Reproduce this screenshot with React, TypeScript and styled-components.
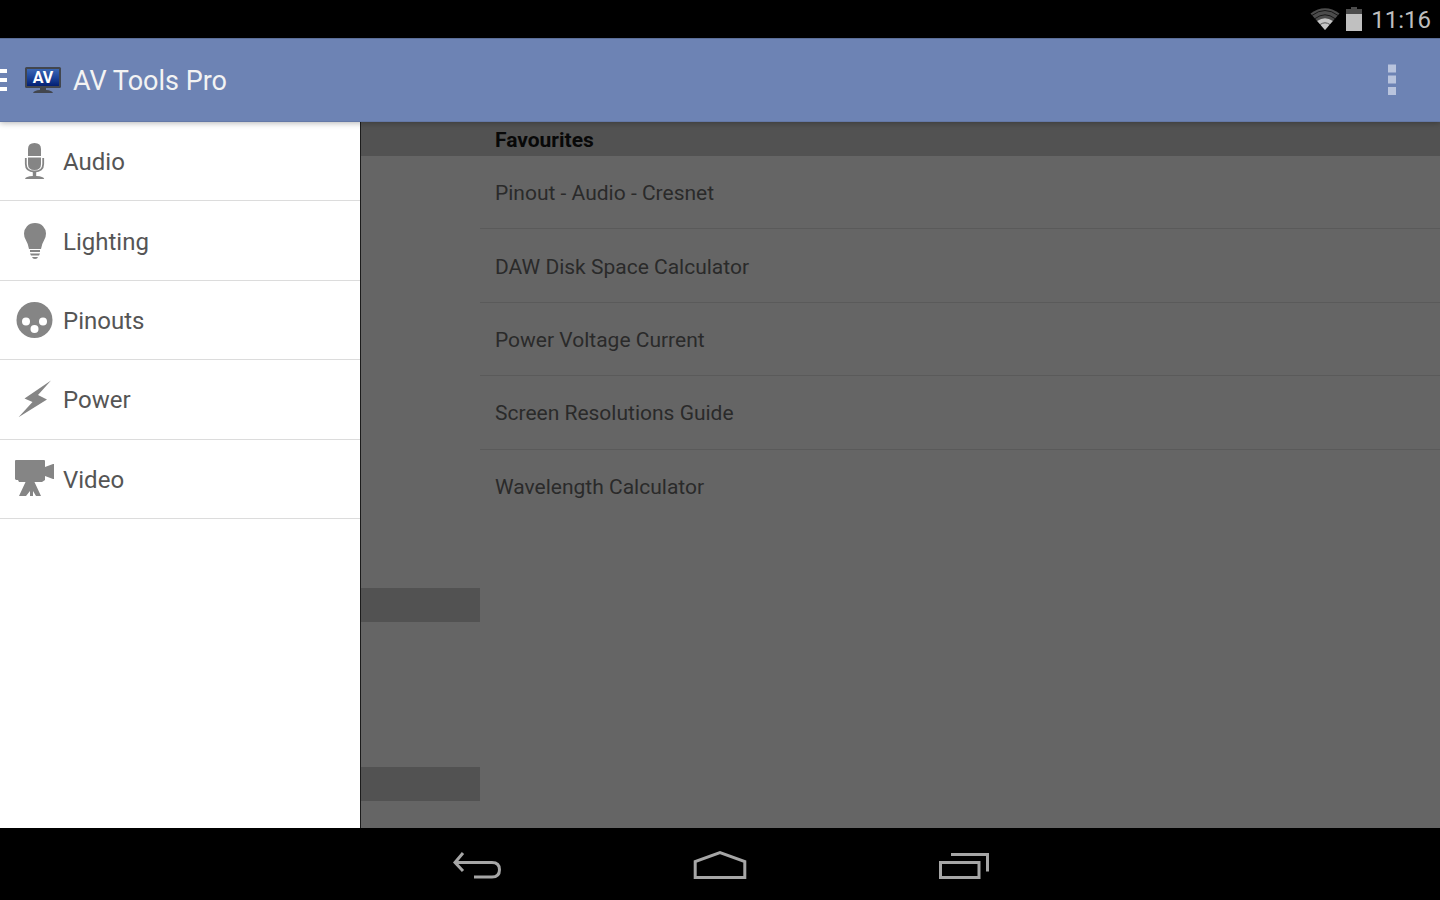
import React from "react";
import styled, { createGlobalStyle } from "styled-components";

const GlobalStyle = createGlobalStyle`
  *, *::before, *::after { box-sizing: border-box; }
  body { margin: 0; background: #000; font-family: Roboto, "Liberation Sans", sans-serif; }
  svg { display: block; flex: none; }
`;

const Screen = styled.div`
  display: flex;
  flex-direction: column;
  min-height: 100vh;
  overflow: hidden;
`;

const StatusBar = styled.div`
  display: flex;
  align-items: center;
  justify-content: flex-end;
  height: 38px;
  padding-right: 9px;
  background: #000;
  color: #bebebe;
`;

const StatusIcons = styled.div`
  display: flex;
  align-items: center;
  gap: 6px;
  height: 36px;
`;

const Clock = styled.time`
  margin-left: 9px;
  font-size: 24px;
  line-height: 38px;
  padding-top: 2px;
`;

const AppBar = styled.header`
  position: relative;
  display: flex;
  align-items: center;
  height: 84px;
  background: #6d83b4;
  border-top: 1px solid #5b6e98;
  border-bottom: 1px solid #6478a6;
  box-shadow: 0 1px 6px rgba(0, 0, 0, 0.3);
  z-index: 2;
`;

const IconButton = styled.button`
  display: flex;
  align-items: center;
  justify-content: center;
  margin: 0;
  padding: 0;
  border: 0;
  background: none;
  cursor: pointer;
`;

const UpButton = styled(IconButton)`
  gap: 17px;
`;

const MenuButton = styled(IconButton)`
  width: 84px;
  height: 82px;
  margin: 0 6px 0 auto;
`;

const Title = styled.h1`
  margin: 0 0 0 11px;
  padding-top: 2px;
  color: #f3f3f3;
  font-size: 27px;
  font-weight: 400;
  line-height: 32px;
`;

const Body = styled.div`
  position: relative;
  display: grid;
  grid-template-columns: 1fr 2fr;
  flex: 1;
  background: #656565;
`;

const Drawer = styled.nav`
  position: absolute;
  top: 0;
  bottom: 0;
  left: 0;
  width: 25%;
  background: #fff;
  box-shadow: 1px 0 0 #1c1c1c;
`;

const DrawerList = styled.ul`
  display: grid;
  grid-template-rows: repeat(5, 1fr);
  height: 397px;
  margin: 0;
  padding: 0;
  list-style: none;
`;

const DrawerItem = styled.li`
  display: flex;
  border-bottom: 1px solid #dcdcdc;
`;

const DrawerLink = styled.a`
  display: flex;
  flex: 1;
  align-items: center;
  gap: 8px;
  padding-left: 14px;
  color: #555;
  font-size: 24px;
  line-height: 32px;
  text-decoration: none;
`;

const DrawerLabel = styled.span`
  padding-top: 2px;
`;

const Pane = styled.section`
  background: #656565;
`;

const SectionBar = styled.div<{ $space: number }>`
  height: 34px;
  margin-bottom: ${(p) => p.$space}px;
  background: #525252;
`;

const SectionTitle = styled.h2`
  height: 34px;
  margin: 0;
  padding-left: 15px;
  background: #525252;
  color: #080808;
  font-size: 21px;
  font-weight: 700;
  line-height: 36px;
`;

const FavouriteList = styled.ul`
  display: grid;
  grid-template-rows: repeat(5, 1fr);
  height: 367px;
  margin: 0;
  padding: 0;
  list-style: none;
`;

const FavouriteItem = styled.li`
  display: flex;
  border-bottom: 1px solid #5a5a5a;
  &:last-child { border-bottom-color: transparent; }
`;

const FavouriteLink = styled.a`
  display: flex;
  flex: 1;
  align-items: center;
  padding: 2px 0 0 15px;
  color: #2a2a2a;
  font-size: 21px;
  line-height: 28px;
  text-decoration: none;
`;

const SystemBar = styled.footer`
  display: flex;
  justify-content: center;
  height: 72px;
  padding-top: 4px;
  background: #000;
`;

const SystemButton = styled(IconButton)`
  width: 244px;
`;

const WifiIcon = () => (
  <svg width="30" height="22" viewBox="0 0 30 22" aria-hidden="true">
    <path d="M15 22 L0.5 5.5 Q15 -5 29.5 5.5Z" fill="#4c4c4c" />
    <path d="M2 7.4 Q15 -2.4 28 7.4M5 10.6 Q15 3 25 10.6" fill="none" stroke="#000" strokeWidth="0.7" />
    <path d="M15 22 L7.2 13 Q15 7.6 22.8 13Z" fill="#c4c4c4" />
    <path d="M10 16.6 Q15 13 20 16.6" fill="none" stroke="#555" strokeWidth="1" />
  </svg>
);

const BatteryIcon = () => (
  <svg width="16" height="24" viewBox="0 0 16 24" aria-hidden="true">
    <path d="M5 0h6v2h5v6H0V2h5z" fill="#4c4c4c" />
    <path d="M0 7h16v17H0z" fill="#c0c0c0" />
  </svg>
);

const HamburgerIcon = () => (
  <svg width="7" height="24" viewBox="0 0 7 24" aria-hidden="true">
    <path d="M0 1h7v4H0zM0 10h7v4H0zM0 19h7v4H0z" fill="#fff" />
  </svg>
);

const LogoIcon = () => (
  <svg width="38" height="28" viewBox="0 0 38 28" aria-hidden="true">
    <defs>
      <linearGradient id="screen" x1="0" y1="0" x2="0" y2="1">
        <stop offset="0" stopColor="#3a66b4" />
        <stop offset="0.5" stopColor="#1c459b" />
        <stop offset="1" stopColor="#031f72" />
      </linearGradient>
    </defs>
    <path d="M16 21h6v3q6 .4 7 3H9q1-2.6 7-3z" fill="#42464e" />
    <rect x="1" y="1" width="36" height="21" rx="1.5" fill="#42464e" />
    <rect x="3" y="3" width="32" height="17" fill="url(#screen)" />
    <text x="19" y="17" textAnchor="middle" fontFamily="Roboto, sans-serif" fontWeight="700" fontSize="16" fill="#fff">AV</text>
  </svg>
);

const OverflowIcon = () => (
  <svg width="8" height="32" viewBox="0 0 8 32" aria-hidden="true">
    <path d="M0 .5h8v8H0zM0 11.500h8v8H0zM0 23h8v8H0z" fill="#b9c4dd" />
  </svg>
);

const MicIcon = () => (
  <svg width="41" height="40" viewBox="0 0 41 40" fill="#858585" aria-hidden="true">
    <path d="M14 15V8q0-6 6.500-6T27 8v7z" />
    <path d="M14 16.500h13V23q0 6-6.500 6T14 23z" />
    <path d="M11.800 17v6q0 7.500 8.700 7.500T29.200 23v-6" fill="none" stroke="#858585" strokeWidth="1.800" />
    <path d="M18.800 30h3.400v5q7.500.3 8 3H11q.5-2.700 7.800-3z" />
  </svg>
);

const BulbIcon = () => (
  <svg width="41" height="40" viewBox="0 0 41 40" fill="#858585" aria-hidden="true">
    <path d="M21 2q5 0 8 3.200t3 7.300q0 3-1.600 6-2.400 4-3.400 9.500H15q-1-5.500-3.400-9.500Q10 15.500 10 12.500q0-4.100 3-7.300T21 2z" />
    <path d="M16 29h10v2H16zM16 32.500h10l-1 2h-8zM18 36h6q-.5 2-3 2t-3-2z" />
  </svg>
);

const PinoutIcon = () => (
  <svg width="41" height="40" viewBox="0 0 41 40" aria-hidden="true">
    <circle cx="20.500" cy="20" r="18" fill="#858585" />
    <g fill="#fff">
      <circle cx="12" cy="21.500" r="4" />
      <circle cx="29" cy="21.500" r="4" />
      <circle cx="20.500" cy="29" r="4" />
    </g>
  </svg>
);

const BoltIcon = () => (
  <svg width="41" height="40" viewBox="0 0 41 40" fill="#858585" aria-hidden="true">
    <path d="M37 1.500L10.500 19.500l8 3.500L4.500 38.200 33 20.500l-9-4.500z" />
  </svg>
);

const CameraIcon = () => (
  <svg width="41" height="40" viewBox="0 0 41 40" fill="#858585" aria-hidden="true">
    <path d="M2 1h28q1 0 1 1v6l8-3h1v15h-1l-8-3v4l-3 2H5l-1-2H2l-1-1V2q0-1 1-1z" />
    <path d="M12 22h8l7 15h-5l-3-5v5h-3v-5l-4 5H5z" />
  </svg>
);

const BackIcon = () => (
  <svg width="50" height="30" viewBox="0 0 50 30" fill="none" stroke="#a6a6a6" strokeWidth="3" aria-hidden="true">
    <path d="M12 2L4 11.500 12 20M4 11.500H41q7.500 0 7.500 7.200T41 26H23" />
  </svg>
);

const HomeIcon = () => (
  <svg width="54" height="30" viewBox="0 0 54 30" fill="none" stroke="#a6a6a6" strokeWidth="3" aria-hidden="true">
    <path d="M2.200 26.500V10.500L27 1.700 51.800 10.500V26.500z" />
  </svg>
);

const RecentsIcon = () => (
  <svg width="50" height="30" viewBox="0 0 50 30" fill="none" stroke="#a6a6a6" strokeWidth="3" aria-hidden="true">
    <path d="M1.500 11.500h38.500v15H1.500zM12 3.500h36.500V20.500" />
  </svg>
);

const categories = [
  { label: "Audio", Icon: MicIcon },
  { label: "Lighting", Icon: BulbIcon },
  { label: "Pinouts", Icon: PinoutIcon },
  { label: "Power", Icon: BoltIcon },
  { label: "Video", Icon: CameraIcon },
];

const favourites = [
  "Pinout - Audio - Cresnet",
  "DAW Disk Space Calculator",
  "Power Voltage Current",
  "Screen Resolutions Guide",
  "Wavelength Calculator",
];

export default function App() {
  return (
    <Screen>
      <GlobalStyle />
      <StatusBar>
        <StatusIcons>
          <WifiIcon />
          <BatteryIcon />
        </StatusIcons>
        <Clock>11:16</Clock>
      </StatusBar>
      <AppBar>
        <UpButton aria-label="Close drawer">
          <HamburgerIcon />
          <LogoIcon />
        </UpButton>
        <Title>AV Tools Pro</Title>
        <MenuButton aria-label="More options">
          <OverflowIcon />
        </MenuButton>
      </AppBar>
      <Body>
        <Pane>
          <SectionBar $space={432} />
          <SectionBar $space={145} />
          <SectionBar $space={0} />
        </Pane>
        <Pane>
          <SectionTitle>Favourites</SectionTitle>
          <FavouriteList>
            {favourites.map((name) => (
              <FavouriteItem key={name}>
                <FavouriteLink href="#">{name}</FavouriteLink>
              </FavouriteItem>
            ))}
          </FavouriteList>
        </Pane>
        <Drawer>
          <DrawerList>
            {categories.map(({ label, Icon }) => (
              <DrawerItem key={label}>
                <DrawerLink href="#">
                  <Icon />
                  <DrawerLabel>{label}</DrawerLabel>
                </DrawerLink>
              </DrawerItem>
            ))}
          </DrawerList>
        </Drawer>
      </Body>
      <SystemBar>
        <SystemButton aria-label="Back"><BackIcon /></SystemButton>
        <SystemButton aria-label="Home"><HomeIcon /></SystemButton>
        <SystemButton aria-label="Recent apps"><RecentsIcon /></SystemButton>
      </SystemBar>
    </Screen>
  );
}
